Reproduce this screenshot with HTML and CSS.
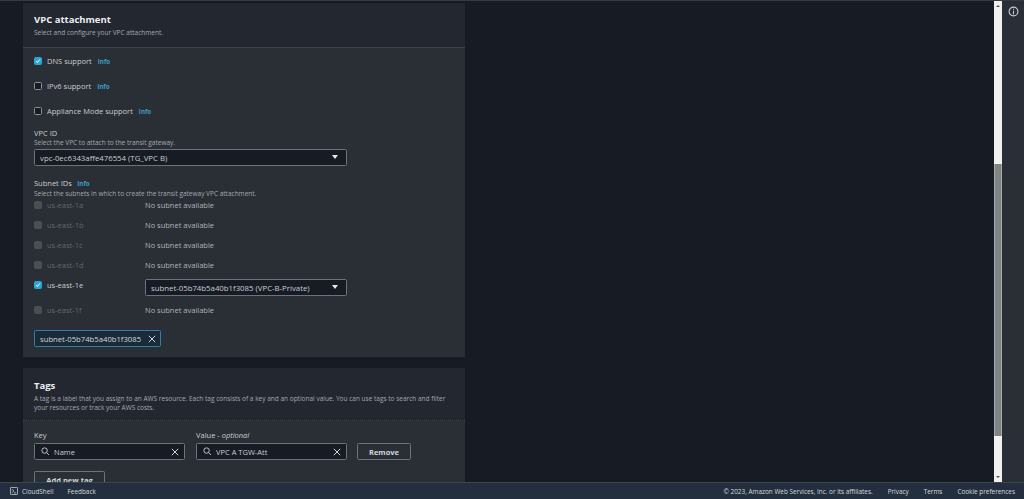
FILE: index.html
```html
<!DOCTYPE html>
<html>
<head>
    <link rel="stylesheet" href="styles.css">
</head>
<body>
    <div class="shell">
        <div class="scroller">
            <main class="content">
                <section class="panel">
                    <header class="panel-head">
                        <h2>VPC attachment</h2>
                        <p class="hint">Select and configure your VPC attachment.</p>
                    </header>
                    <div class="panel-body">
                        <label class="check-row"><span class="box checked"><svg viewBox="0 0 8 8"><path d="M1.4 4.2 3.2 6 6.6 1.8"/></svg></span>DNS support <a class="info">Info</a></label>
                        <label class="check-row"><span class="box"></span>IPv6 support <a class="info">Info</a></label>
                        <label class="check-row"><span class="box"></span>Appliance Mode support <a class="info">Info</a></label>

                        <div class="field vpc-field">
                            <div class="field-label">VPC ID</div>
                            <p class="hint">Select the VPC to attach to the transit gateway.</p>
                            <div class="select">vpc-0ec6343affe476554 (TG_VPC B)<span class="caret"></span></div>
                        </div>

                        <div class="field subnet-field">
                            <div class="field-label">Subnet IDs <a class="info">Info</a></div>
                            <p class="hint">Select the subnets in which to create the transit gateway VPC attachment.</p>
                        </div>

                        <div class="az-row"><span class="az off"><span class="box disabled"></span>us-east-1a</span><span class="none">No subnet available</span></div>
                        <div class="az-row"><span class="az off"><span class="box disabled"></span>us-east-1b</span><span class="none">No subnet available</span></div>
                        <div class="az-row"><span class="az off"><span class="box disabled"></span>us-east-1c</span><span class="none">No subnet available</span></div>
                        <div class="az-row"><span class="az off"><span class="box disabled"></span>us-east-1d</span><span class="none">No subnet available</span></div>
                        <div class="az-row picked">
                            <span class="az"><span class="box checked"><svg viewBox="0 0 8 8"><path d="M1.4 4.2 3.2 6 6.6 1.8"/></svg></span>us-east-1e</span>
                            <div class="select subnet-select">subnet-05b74b5a40b1f3085 (VPC-B-Private)<span class="caret"></span></div>
                        </div>
                        <div class="az-row"><span class="az off"><span class="box disabled"></span>us-east-1f</span><span class="none">No subnet available</span></div>

                        <div class="token">subnet-05b74b5a40b1f3085
                            <svg class="x" viewBox="0 0 10 10"><path d="M1 1 9 9M9 1 1 9"/></svg>
                        </div>
                    </div>
                </section>

                <section class="panel tags-panel">
                    <header class="panel-head">
                        <h2>Tags</h2>
                        <p class="hint">A tag is a label that you assign to an AWS resource. Each tag consists of a key and an optional value. You can use tags to search and filter your resources or track your AWS costs.</p>
                    </header>
                    <div class="panel-body tags-body">
                        <div class="tag-row">
                            <div class="tag-col">
                                <div class="field-label">Key</div>
                                <div class="search">
                                    <svg class="lens" viewBox="0 0 10 10"><circle cx="4.2" cy="4.2" r="3.2"/><path d="M6.6 6.6 9.4 9.4"/></svg>
                                    <span class="grow">Name</span>
                                    <svg class="x" viewBox="0 0 10 10"><path d="M1 1 9 9M9 1 1 9"/></svg>
                                </div>
                            </div>
                            <div class="tag-col">
                                <div class="field-label">Value - <i>optional</i></div>
                                <div class="search">
                                    <svg class="lens" viewBox="0 0 10 10"><circle cx="4.2" cy="4.2" r="3.2"/><path d="M6.6 6.6 9.4 9.4"/></svg>
                                    <span class="grow">VPC A TGW-Att</span>
                                    <svg class="x" viewBox="0 0 10 10"><path d="M1 1 9 9M9 1 1 9"/></svg>
                                </div>
                            </div>
                            <button class="btn remove">Remove</button>
                        </div>
                        <button class="btn add">Add new tag</button>
                    </div>
                </section>
            </main>
            <div class="scrollbar">
                <span class="arrow up"></span>
                <div class="track"><div class="thumb"></div></div>
                <span class="arrow down"></span>
            </div>
        </div>
        <aside class="tools">
            <svg class="info-icon" viewBox="0 0 12 12"><circle cx="6" cy="6" r="4.8"/><path d="M6 5.2V9M6 3V4.2"/></svg>
        </aside>
    </div>
    <footer class="footer">
        <div class="foot-left">
            <span class="foot-link shell-link">
                <svg class="term" viewBox="0 0 10 10"><rect x=".5" y=".5" width="9" height="9" rx="1"/><path d="M2.6 2.8 4.8 5 2.6 7.2M5 7.4H7.6"/></svg>
                CloudShell
            </span>
            <span class="foot-link">Feedback</span>
        </div>
        <div class="foot-right">
            <span>© 2023, Amazon Web Services, Inc. or its affiliates.</span>
            <span>Privacy</span>
            <span>Terms</span>
            <span>Cookie preferences</span>
        </div>
    </footer>
</body>
</html>
```

FILE: styles.css
```css
* {
    box-sizing: border-box;
}

html, body {
    height: 100%;
}

body {
    margin: 0;
    display: flex;
    flex-direction: column;
    overflow: hidden;
    background-color: #171b24;
    color: #d1d5db;
    font-family: "Open Sans", "Noto Sans", sans-serif;
    font-size: 7.5px;
}

.shell {
    flex: 1;
    min-height: 0;
    display: flex;
    border-top: 1px solid #353b44;
}

.scroller {
    flex: 1;
    min-width: 0;
    display: flex;
    overflow: hidden;
}

.content {
    flex: 1;
    min-width: 0;
    padding: 2px 0 0 23px;
}

.panel {
    width: 442px;
    background: #2a2e35;
}

.tags-panel {
    margin-top: 11px;
}

.panel-head {
    padding: 10px 11px 10px;
    background: #232730;
    border-bottom: 1px solid #3f444c;
}

.tags-panel .panel-head {
    padding: 11px 11px 8px;
    border-bottom-style: dotted;
}

h2 {
    margin: 0 0 1px;
    font-size: 9.5px;
    line-height: 14px;
    font-weight: 700;
    color: #eceef0;
}

.hint {
    margin: 0;
    font-size: 6.5px;
    line-height: 9px;
    color: #a4a9b0;
}

.panel-body {
    padding: 0 11px 10px;
}

.check-row {
    display: flex;
    align-items: center;
    height: 25px;
    font-size: 7.5px;
    color: #c9cdd2;
}

.box {
    flex: none;
    width: 8px;
    height: 8px;
    margin-right: 5px;
    border: 1px solid #8a9199;
    border-radius: 1.5px;
    background: #171b24;
}

.box svg {
    display: block;
    width: 6px;
    height: 6px;
}

.box svg path {
    fill: none;
    stroke: #fff;
    stroke-width: 1.3;
}

.box.checked {
    background: #2ba6cf;
    border-color: #2ba6cf;
}

.box.disabled {
    background: #4a4e55;
    border-color: #4a4e55;
}

.info {
    margin-left: 6px;
    margin-top: 1px;
    font-size: 6.2px;
    font-weight: 700;
    color: #3d9fc4;
}

.field-label {
    font-size: 7.5px;
    line-height: 10px;
    color: #c9cdd2;
}

.field-label .info {
    margin-left: 3.5px;
}

.vpc-field {
    margin-top: 5px;
}

.select {
    position: relative;
    display: flex;
    align-items: center;
    width: 313px;
    height: 17px;
    margin-top: 2px;
    padding-left: 5px;
    background: #171b24;
    border: 1px solid #6c737b;
    border-radius: 1.5px;
    font-size: 7.8px;
    color: #c9cdd2;
}

.caret {
    position: absolute;
    right: 8px;
    top: 5px;
    border-left: 3px solid transparent;
    border-right: 3px solid transparent;
    border-top: 4px solid #e6e8ea;
}

.subnet-field {
    margin-top: 12px;
    margin-bottom: -3px;
}

.az-row {
    display: flex;
    align-items: center;
    height: 20px;
    font-size: 7.5px;
}

.az-row.picked {
    height: 25px;
    align-items: flex-start;
}

.az {
    display: flex;
    align-items: center;
    width: 111px;
    color: #c9cdd2;
}

.picked .az {
    height: 20px;
}

.az.off {
    color: #62676e;
}

.none {
    color: #b0b4ba;
}

.subnet-select {
    width: 202px;
    margin-top: 4px;
}

.token {
    display: flex;
    align-items: center;
    justify-content: space-between;
    width: 127px;
    height: 17px;
    margin-top: 10px;
    padding: 0 4px 0 5px;
    background: #1b2a38;
    border: 1px solid #2f7fa6;
    border-radius: 1.5px;
    font-size: 7.7px;
    color: #d1d5db;
}

.x {
    width: 8px;
    height: 8px;
    flex: none;
}

.x path {
    fill: none;
    stroke: #d8dbdf;
    stroke-width: 1.2;
}

.tags-body {
    padding-top: 9px;
}

.tag-row {
    display: flex;
    align-items: flex-end;
    gap: 11px;
}

.tag-col {
    width: 151px;
}

.search {
    display: flex;
    align-items: center;
    height: 17px;
    margin-top: 3px;
    padding: 0 5px 0 6px;
    background: #171b24;
    border: 1px solid #6c737b;
    border-radius: 1.5px;
    font-size: 7.5px;
    color: #c9cdd2;
}

.lens {
    width: 8.5px;
    height: 8.5px;
    margin-right: 4.5px;
    flex: none;
}

.lens circle, .lens path {
    fill: none;
    stroke: #c9cdd2;
    stroke-width: 1.1;
}

.grow {
    flex: 1;
}

.btn {
    height: 17px;
    padding: 0;
    background: transparent;
    border: 1px solid #6c737b;
    border-radius: 1.5px;
    font-family: inherit;
    font-size: 7.5px;
    font-weight: 700;
    color: #d1d5db;
}

.remove {
    width: 54px;
    margin-left: -1px;
}

.add {
    display: block;
    width: 71px;
    margin-top: 11px;
}

.scrollbar {
    flex: none;
    width: 8px;
    display: flex;
    flex-direction: column;
    background: #f1f1f1;
}

.arrow {
    flex: none;
    height: 10px;
    position: relative;
}

.arrow::before {
    content: '';
    position: absolute;
    left: 2px;
    border-left: 2px solid transparent;
    border-right: 2px solid transparent;
}

.arrow.up::before {
    top: 4px;
    border-bottom: 2px solid #555;
}

.arrow.down::before {
    bottom: 4px;
    border-top: 2px solid #555;
}

.track {
    flex: 1;
    padding-top: 153px;
    padding-bottom: 36px;
    display: flex;
}

.thumb {
    flex: 1;
    background: #7f8484;
    border-left: 1px solid #a9abab;
    border-right: 1px solid #a9abab;
}

.tools {
    flex: none;
    width: 22px;
    background: #2a2e35;
    display: flex;
    justify-content: center;
    padding-top: 5px;
}

.info-icon {
    width: 11px;
    height: 11px;
}

.info-icon circle, .info-icon path {
    fill: none;
    stroke: #c9cdd2;
    stroke-width: 1.2;
}

.footer {
    flex: none;
    display: flex;
    justify-content: space-between;
    align-items: center;
    height: 17px;
    padding: 0 9px 0 10px;
    background: #232f3e;
    border-top: 1px solid #3c4650;
    font-size: 6.4px;
    color: #d5dbdb;
}

.foot-left, .foot-right {
    display: flex;
    align-items: center;
}

.foot-left {
    gap: 14px;
}

.foot-right {
    gap: 15px;
}

.foot-link {
    display: flex;
    align-items: center;
}

.term {
    width: 8px;
    height: 8px;
    margin-right: 4px;
}

.term rect, .term path {
    fill: none;
    stroke: #d5dbdb;
    stroke-width: 1;
}
```
